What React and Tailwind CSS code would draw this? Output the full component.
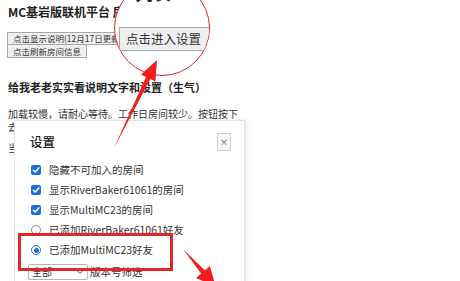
import React from "react";

const FONT = { fontFamily: '"Noto Sans CJK SC", "Noto Sans", sans-serif' };

function Check() {
  return (
    <span className="flex h-[10px] w-[10px] shrink-0 items-center justify-center rounded-[2px] bg-[#1a6fd8]">
      <svg width="8" height="8" viewBox="0 0 8 8">
        <path d="M1.3 4.2 L3.2 6 L6.8 1.9" fill="none" stroke="#fff" strokeWidth="1.5" strokeLinecap="round" strokeLinejoin="round" />
      </svg>
    </span>
  );
}

function Radio({ on }) {
  return on ? (
    <span className="flex h-[10px] w-[10px] shrink-0 items-center justify-center rounded-full border-[1.5px] border-[#1a6fd8] bg-white">
      <span className="h-[5px] w-[5px] rounded-full bg-[#1a6fd8]" />
    </span>
  ) : (
    <span className="h-[10px] w-[10px] shrink-0 rounded-full border border-[#8a8a8a] bg-white" />
  );
}

function Row({ children, control }) {
  return (
    <div className="flex h-[20px] items-center gap-[8px]">
      {control}
      <span className="text-[10.5px] leading-none text-[#333]">{children}</span>
    </div>
  );
}

export default function App() {
  return (
    <div className="relative h-[281px] w-[460px] overflow-hidden bg-white text-[#222]" style={FONT}>
      {/* page content */}
      <div className="flex flex-col items-start px-[7px] pt-[4px]">
        <h1 className="pl-px text-[12px] font-bold leading-[16px]">MC基岩版联机平台 房间列表</h1>
        <div className="mt-[12px] flex flex-col items-start">
          <button className="flex h-[13px] items-center border border-[#a8a8a8] bg-[#efefef] px-[5px] text-[8.5px] leading-none text-[#333]">
            点击显示说明(12月17日更新)
          </button>
          <button className="flex h-[13px] items-center border border-t-0 border-[#a8a8a8] bg-[#efefef] px-[5px] text-[8.5px] leading-none text-[#333]">
            点击刷新房间信息
          </button>
        </div>
        <h2 className="mt-[22px] pl-px text-[11px] font-bold leading-[14px]">给我老老实实看说明文字和设置（生气）</h2>
        <p className="mt-[13px] w-[240px] pl-px text-[10px] leading-[13px] text-[#333]">
          加载较慢，请耐心等待。工作日房间较少。按钮按下去后请等待加载完成。
        </p>
        <p className="mt-[8px] pl-px text-[10px] leading-[13px] text-[#333]">当前在线房间</p>
      </div>

      {/* magnifier circle */}
      <div className="absolute left-[114px] top-[-20px] h-[96px] w-[96px] overflow-hidden rounded-full border-[1.5px] border-[#d8262d] bg-white">
        <span className="absolute left-[20px] top-[2px] text-[18px] font-bold leading-[18px] text-[#222]">列表</span>
        <div className="absolute left-[4px] top-[46px] flex h-[24px] w-[92px] items-center border border-[#a8a8a8] bg-[#efefef] pl-[6px] text-[12.5px] leading-none text-[#333]">
          点击进入设置
        </div>
      </div>

      {/* settings dialog */}
      <div className="absolute left-[14px] top-[120px] h-[175px] w-[231px] border border-[#e2e2e2] bg-white shadow-[2px_0_4px_rgba(0,0,0,0.08)]">
        <div className="flex items-center justify-between pl-[15px] pr-[13px] pt-[12px]">
          <span className="text-[12.5px] font-medium leading-none text-[#222]">设置</span>
          <span className="flex h-[18px] w-[14px] items-center justify-center border border-[#cfcfcf] bg-[#f6f6f6] text-[8px] leading-none text-[#444]">
            ×
          </span>
        </div>
        <div className="mt-[9px] flex flex-col pl-[16px]">
          <Row control={<Check />}>隐藏不可加入的房间</Row>
          <Row control={<Check />}>显示RiverBaker61061的房间</Row>
          <Row control={<Check />}>显示MultiMC23的房间</Row>
          <Row control={<Radio />}>已添加RiverBaker61061好友</Row>
          <Row control={<Radio on />}>已添加MultiMC23好友</Row>
          <div className="mt-[4px] flex items-center gap-[2px] -ml-[3px]">
            <span className="flex h-[16px] w-[60px] items-center justify-between rounded-[2px] border border-[#b5b5b5] bg-white px-[3px] text-[10px] leading-none text-[#333]">
              全部
              <svg width="8" height="6" viewBox="0 0 8 6">
                <path d="M1 1.5 L4 4.5 L7 1.5" fill="none" stroke="#555" strokeWidth="1" />
              </svg>
            </span>
            <span className="text-[10.5px] leading-none text-[#333]">版本号筛选</span>
          </div>
        </div>
      </div>

      {/* annotations */}
      <svg className="pointer-events-none absolute left-0 top-0" width="460" height="281" viewBox="0 0 460 281">
        <polygon points="157,60 155.4,81.5 150.4,79 114,148 146,77 141,74.5" fill="#f01e1e" />
        <polygon points="183,249 204.9,270.4 209.8,266 216,287 196.2,278 201.1,273.6" fill="#f01e1e" />
        <rect x="19.5" y="234.5" width="152" height="35" fill="none" stroke="#e3262b" strokeWidth="3" />
      </svg>
    </div>
  );
}
